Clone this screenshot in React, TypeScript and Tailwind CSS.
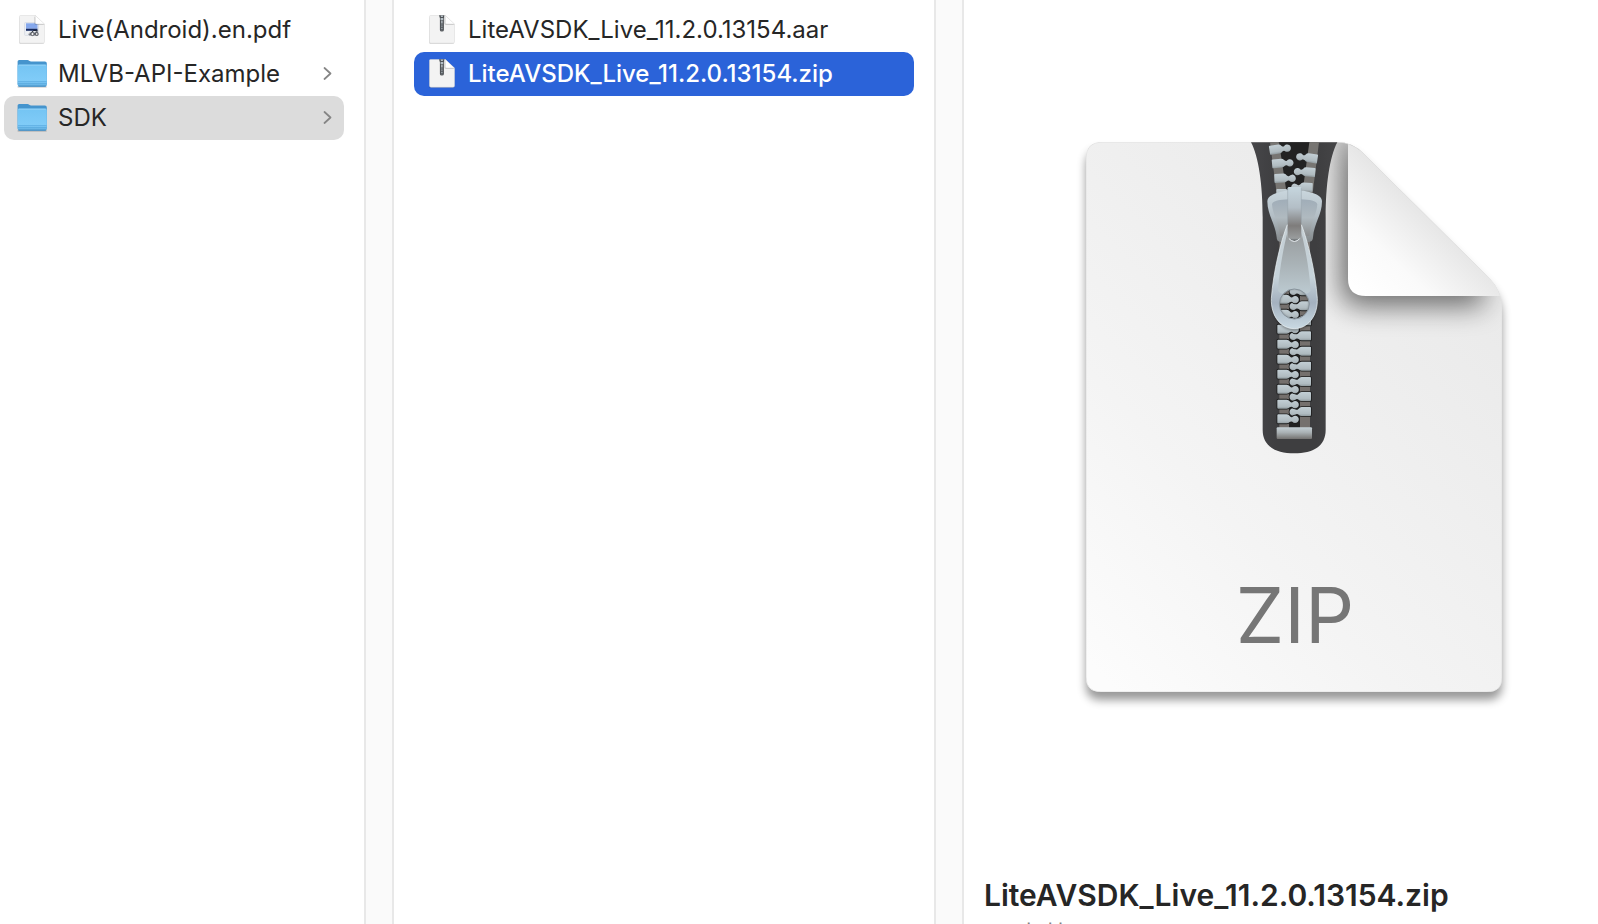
import type { ReactNode } from "react";
import clsx from "clsx";

function FolderIcon({ id }: { id: string }) {
  return (
    <svg viewBox="0 0 32 32" className="size-8" aria-hidden="true">
      <defs>
        <linearGradient id={id} x1="0" y1="0" x2="0" y2="1">
          <stop offset="0" stopColor="#74c4f3" />
          <stop offset="0.75" stopColor="#80ccf8" />
          <stop offset="1" stopColor="#62afe0" />
        </linearGradient>
      </defs>
      <path d="M1.600 28.300h29v1.200h-29z" fill="#000" opacity=".25" />
      <path
        d="M1.600 3.600Q1.600 2 3.200 2h8.200c1.600 0 2 1.500 3.800 1.500h13.700q1.900 0 1.900 1.800V26q0 2.400-2 2.400H3.600q-2 0-2-2.400z"
        fill="#4594cd"
      />
      <path d="M1.600 8.200q0-1.600 1.600-1.600h26q1.600 0 1.600 1.600V26.200q0 2.200-2 2.200H3.600q-2 0-2-2.200z" fill={`url(#${id})`} />
      <path d="M2.600 7.200h27.200" stroke="#9ad6f8" strokeWidth=".8" />
      <path d="M2 23.600h28.600M2 25.600h28.600" stroke="#4b9fd8" strokeWidth=".7" opacity=".75" />
      <path d="M2.400 28.100h27.600" stroke="#3984bd" strokeWidth=".8" />
    </svg>
  );
}

function SmallPaper({ children }: { children: ReactNode }) {
  return (
    <svg viewBox="0 0 32 32" className="size-8" aria-hidden="true">
      <path d="M3.500 3.500h16L28 12v16.500q0 1.500-1.500 1.500h-22Q3.200 30 3.200 28.500z" fill="#000" opacity=".16" />
      <path
        d="M3.500 2.500q0-1 1-1H19.300L28.500 10.500V27.800q0 1.400-1.400 1.400H4.900q-1.400 0-1.400-1.400z"
        fill="#f3f3f3"
        stroke="#d6d6d6"
        strokeWidth=".5"
      />
      {children}
      <path d="M18.400 2.400V9.300Q18.400 11 20 11h8.500z" fill="#000" opacity=".16" />
      <path d="M19.300 1.500V8.700Q19.300 10 20.600 10h7.900z" fill="#fff" stroke="#d0d0d0" strokeWidth=".4" />
    </svg>
  );
}

function ZipFileIcon() {
  return (
    <SmallPaper>
      <path d="M13 1.300h5.400l-.5 3V16q0 1.600-2 1.600t-2-1.600V4.300z" fill="#505458" />
      <path d="M14.900 1.600h2v1.300h-2zM14.600 4h2.600v2h-2.600z" fill="#b5bfc6" />
      <path d="M15.900 6.500v3" stroke="#c9d2d8" strokeWidth="1.200" />
      <path d="M15.900 10.600v5.600" stroke="#aab4ba" strokeWidth="1.300" strokeDasharray="1 .7" />
    </SmallPaper>
  );
}

function PdfFileIcon() {
  return (
    <SmallPaper>
      <rect x="8.500" y="8.500" width="14" height="13" rx="1" fill="#e9edf3" stroke="#cdd1d8" strokeWidth=".5" />
      <path d="M10 9.300h11.500v5.400H10z" fill="#86a8ec" />
      <path d="M10 14.700h11.500v2.100H10z" fill="#14285e" />
      <path d="M11 18.500h8l2.300-2.500 1 5.500h-9z" fill="#7c8088" />
      <path d="M10.300 18h3.200v1.800h-3.200z" fill="#f4f4f4" />
      <circle cx="16.500" cy="20" r="1.600" fill="#f2f2f2" stroke="#30343c" strokeWidth=".7" />
      <circle cx="20.700" cy="20" r="1.500" fill="#dadada" stroke="#30343c" strokeWidth=".7" />
      <path d="M15.500 18.200l2.500-1.800 3.500.4" stroke="#111722" strokeWidth=".8" fill="none" />
    </SmallPaper>
  );
}

const toothPath =
  "M-50 -12Q-50 -14 -47 -14H-22Q-16 -14 -13 -9Q-8 -4 -5 -6A11 11 0 1 1 -5 8Q-9 6 -13 9Q-16 13 -22 13H-47Q-50 13 -50 11Z";

const openLeft = [
  [198, 54, -9],
  [206, 98, -5],
  [213, 144, -2],
  [219, 191, 0],
];
const openRight = [
  [243, 80, 9],
  [236, 124, 5],
  [228, 171, 2],
];
const closedLeft = [508, 553, 598, 643, 688, 733, 778, 823, 867];
const closedRight = [483, 528, 573, 618, 664, 709, 755, 800, 845];

function Zipper() {
  return (
    <g transform="translate(1220 130) scale(.33333)">
      <path
        d="M93 37H352C329 80 317 165 317 262V900C317 948 280 970 223 970S128 948 128 900V262C128 165 116 80 93 37Z"
        fill="url(#tape)"
      />
      <path d="M174 37H270L250 190V895H196V190Z" fill="#222222" />
      <path d="M150 37H177L200 190H170ZM297 37H268L247 190H278Z" fill="#777572" />
      <path d="M178 190H207V895H178ZM240 190H270V895H240Z" fill="#75706d" />
      <g clipPath="url(#zipOpen)" fill="url(#tooth)">
        {openLeft.map(([x, y, r]) => (
          <path key={y} d={toothPath} transform={`translate(${x} ${y}) rotate(${r})`} />
        ))}
        {openRight.map(([x, y, r]) => (
          <path key={y} d={toothPath} transform={`translate(${x} ${y}) rotate(${r}) scale(-1 1)`} />
        ))}
      </g>
      <g fill="url(#tooth)" stroke="#1d1d1d" strokeWidth="5" paintOrder="stroke">
        <path d="M207 465H240V893H207Z" fill="#222" stroke="none" />
        {closedRight.map((y) => (
          <path key={y} d={toothPath} transform={`translate(223 ${y}) scale(-1 1)`} />
        ))}
        {closedLeft.map((y) => (
          <path key={y} d={toothPath} transform={`translate(222 ${y})`} />
        ))}
      </g>
      <rect x="170" y="892" width="106" height="35" rx="3" fill="url(#stopBar)" />

      <path
        d="M142 214C142 202 153 195 170 189C188 183 205 181 224 181S260 183 278 189C296 195 306 202 306 214C306 255 282 280 279 322Q279 336 266 336H182Q170 336 170 322C166 280 142 255 142 214Z"
        fill="url(#slider)"
      />
      <path
        d="M156 223C158 213 180 209 206 208H242C268 209 290 213 292 223C290 254 273 274 268 318H180C175 274 158 254 156 223Z"
        fill="url(#sliderInner)"
      />
      <path
        fillRule="evenodd"
        d="M203 330C190 365 160 440 154 510C152 564 184 602 223 602S294 564 292 510C286 440 256 365 243 330ZM223 478A44 44 0 1 0 223 566A44 44 0 1 0 223 478Z"
        fill="#000"
        opacity=".3"
        filter="url(#pullShadow)"
      />
      <rect x="203" y="171" width="41" height="155" rx="4" fill="url(#bridge)" />
      <path d="M203 174V280M244 174V280" stroke="#95a1a9" strokeWidth="1.500" />
      <path
        fillRule="evenodd"
        d="M202 284C182 335 160 425 154 505C152 560 184 596 223 596S294 560 292 505C286 425 264 335 244 284V322Q223 345 203 322ZM223 478A44 44 0 1 0 223 566A44 44 0 1 0 223 478Z"
        fill="url(#pull)"
      />
      <path
        d="M202 308C190 355 178 420 174 482Q188 498 196 487Q205 478 223 478T250 487Q258 498 272 482C268 420 256 355 244 308V322Q223 345 203 322Z"
        fill="url(#pullFace)"
      />
      <path
        d="M202 284C182 335 160 425 154 505C152 560 184 596 223 596S294 560 292 505C286 425 264 335 244 284"
        fill="none"
        stroke="#edf3f6"
        strokeWidth="2.500"
        opacity=".85"
      />
      <path d="M207 326Q223 343 239 326" fill="none" stroke="#e3e8eb" strokeWidth="3" />
      <circle cx="223" cy="522" r="45" fill="none" stroke="#87929a" strokeWidth="3" />
    </g>
  );
}

const paperPath =
  "M1086 158Q1086 142 1102 142H1337Q1353 142 1364 154L1490 279Q1502 291 1502 308V678Q1502 692 1487 692H1101Q1086 692 1086 677Z";
const foldPath = "M1348 144Q1357 147 1364 154L1490 279Q1497 286 1500 296H1366Q1348 296 1348 279Z";

function ZipDocument() {
  return (
    <svg viewBox="1060 120 480 600" className="h-[600px] w-[480px]" role="img" aria-label="ZIP">
      <defs>
        <linearGradient id="paper" x1="1086" y1="660" x2="1502" y2="260" gradientUnits="userSpaceOnUse">
          <stop offset="0" stopColor="#fcfcfc" />
          <stop offset=".35" stopColor="#f4f4f4" />
          <stop offset="1" stopColor="#e9e9e9" />
        </linearGradient>
        <linearGradient id="fold" x1="1358" y1="290" x2="1428" y2="216" gradientUnits="userSpaceOnUse">
          <stop offset="0" stopColor="#ffffff" />
          <stop offset=".45" stopColor="#fafafa" />
          <stop offset="1" stopColor="#e6e6e6" />
        </linearGradient>
        <linearGradient id="tape" x1="0" y1="0" x2="1" y2="0">
          <stop offset="0" stopColor="#464649" />
          <stop offset=".3" stopColor="#3e3e40" />
          <stop offset=".75" stopColor="#3e3e40" />
          <stop offset="1" stopColor="#454547" />
        </linearGradient>
        <linearGradient id="tooth" x1="0" y1="0" x2="0" y2="1">
          <stop offset="0" stopColor="#c3cfd5" />
          <stop offset=".75" stopColor="#b0bbc0" />
          <stop offset="1" stopColor="#929ca0" />
        </linearGradient>
        <linearGradient id="stopBar" x1="0" y1="0" x2="0" y2="1">
          <stop offset="0" stopColor="#c5d0d5" />
          <stop offset=".45" stopColor="#a9b0b3" />
          <stop offset="1" stopColor="#747270" />
        </linearGradient>
        <linearGradient id="slider" x1="0" y1="0" x2="0" y2="1">
          <stop offset="0" stopColor="#c9d6dd" />
          <stop offset=".5" stopColor="#b3bec5" />
          <stop offset="1" stopColor="#83888a" />
        </linearGradient>
        <linearGradient id="sliderInner" x1="0" y1="0" x2="0" y2="1">
          <stop offset="0" stopColor="#a0adb8" />
          <stop offset=".5" stopColor="#b0bac0" />
          <stop offset="1" stopColor="#8b8d8e" />
        </linearGradient>
        <linearGradient id="bridge" x1="0" y1="0" x2="0" y2="1">
          <stop offset="0" stopColor="#c6d6de" />
          <stop offset=".4" stopColor="#b3bec6" />
          <stop offset=".75" stopColor="#7e7c7b" />
          <stop offset="1" stopColor="#9a9d9e" />
        </linearGradient>
        <linearGradient id="pull" x1="0" y1="0" x2="0" y2="1">
          <stop offset="0" stopColor="#c5ced3" />
          <stop offset=".5" stopColor="#c6d3da" />
          <stop offset=".75" stopColor="#a4b1bf" />
          <stop offset="1" stopColor="#c9d9e2" />
        </linearGradient>
        <linearGradient id="pullFace" x1="0" y1="0" x2="0" y2="1">
          <stop offset="0" stopColor="#989c9e" />
          <stop offset=".5" stopColor="#a9b2b6" />
          <stop offset="1" stopColor="#bccad1" />
        </linearGradient>
        <clipPath id="paperClip">
          <path d={paperPath} />
        </clipPath>
        <clipPath id="zipOpen">
          <path d="M90 37H360V210H90Z" />
        </clipPath>
        <filter id="paperShadow" x="-20%" y="-20%" width="140%" height="140%">
          <feGaussianBlur stdDeviation="5" />
        </filter>
        <filter id="foldShadow" x="-40%" y="-40%" width="180%" height="180%">
          <feGaussianBlur stdDeviation="14" />
        </filter>
        <filter id="pullShadow" x="-20%" y="-20%" width="140%" height="140%">
          <feGaussianBlur stdDeviation="3" />
        </filter>
      </defs>
      <path d={paperPath} fill="#000" opacity=".4" filter="url(#paperShadow)" transform="translate(0 8)" />
      <path d={paperPath} fill="url(#paper)" />
      <g clipPath="url(#paperClip)">
        <path
          d="M1341 110Q1357 147 1364 154L1480 270Q1484 288 1484 306H1361Q1341 306 1341 286Z"
          fill="#000"
          opacity=".55"
          filter="url(#foldShadow)"
        />
        <path d={paperPath} fill="none" stroke="#e2e2e2" strokeWidth="1" />
      </g>
      <path d={foldPath} fill="url(#fold)" />
      <Zipper />
      <text
        x="1295"
        y="643"
        textAnchor="middle"
        fill="#767676"
        fontSize="77"
        fontFamily="Inter, 'Liberation Sans', sans-serif"
      >
        ZIP
      </text>
    </svg>
  );
}

type RowProps = {
  name: string;
  icon: ReactNode;
  folder?: boolean;
  state?: "idle" | "path" | "selected";
};

function FileRow({ name, icon, folder = false, state = "idle" }: RowProps) {
  return (
    <li>
      <button
        type="button"
        className={clsx(
          "flex h-11 w-full items-center gap-[10px] rounded-[10px] pr-3 pl-3 text-left text-2xl leading-8",
          state === "idle" && "text-[#262626]",
          state === "path" && "bg-[#dcdcdc] text-[#262626]",
          state === "selected" && "bg-[#2b63d9] font-medium text-white",
        )}
      >
        {icon}
        <span className="grow truncate">{name}</span>
        {folder && (
          <svg viewBox="0 0 10 14" className="h-[14px] w-[10px]" aria-hidden="true">
            <path
              d="M2.500 1L8.500 6.500L2.500 12"
              fill="none"
              stroke="#858585"
              strokeWidth="1.700"
              strokeLinecap="round"
              strokeLinejoin="round"
            />
          </svg>
        )}
      </button>
    </li>
  );
}

function Gutter() {
  return <div className="w-[30px] shrink-0 border-x-2 border-[#e8e8e8] bg-[#fafafa]" />;
}

export default function App() {
  return (
    <main className="flex h-screen overflow-hidden bg-white font-[Inter,'Liberation_Sans','Noto_Sans_CJK_SC',sans-serif]">
      <ul className="w-[364px] shrink-0 pt-2 pr-5 pl-1">
        <FileRow name="Live(Android).en.pdf" icon={<PdfFileIcon />} />
        <FileRow name="MLVB-API-Example" icon={<FolderIcon id="folderExample" />} folder />
        <FileRow name="SDK" icon={<FolderIcon id="folderSdk" />} folder state="path" />
      </ul>
      <Gutter />
      <ul className="w-[540px] shrink-0 px-5 pt-2">
        <FileRow name="LiteAVSDK_Live_11.2.0.13154.aar" icon={<ZipFileIcon />} />
        <FileRow name="LiteAVSDK_Live_11.2.0.13154.zip" icon={<ZipFileIcon />} state="selected" />
      </ul>
      <Gutter />
      <section className="flex min-w-0 grow flex-col pt-[120px]">
        <div className="flex shrink-0 justify-center pl-[38px]">
          <ZipDocument />
        </div>
        <div className="shrink-0 pt-[155px] pl-5">
          <h1 className="text-3xl leading-10 font-semibold whitespace-nowrap text-[#262626]">
            LiteAVSDK_Live_11.2.0.13154.zip
          </h1>
          <p className="pt-1 text-2xl leading-8 whitespace-nowrap text-[#808080]">ZIP归档</p>
        </div>
      </section>
    </main>
  );
}
